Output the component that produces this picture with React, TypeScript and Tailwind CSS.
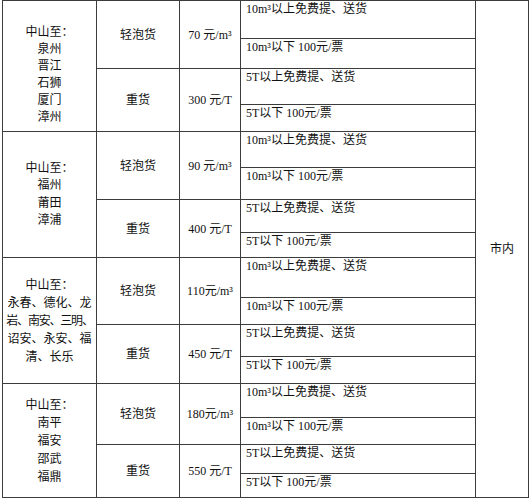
import React from "react";

const font = {
  fontFamily: '"Liberation Serif", "Noto Sans CJK SC", serif',
};

type Group = {
  lines: string[];
  lead: string;
  extra: string;
  light: string;
  heavy: string;
  rows: [number, number, number, number];
};

const groups: Group[] = [
  {
    lines: ["中山至：", "泉州", "晋江", "石狮", "厦门", "漳州"],
    lead: "leading-[17px]",
    extra: "pt-[18px]",
    light: "70 元/m³",
    heavy: "300 元/T",
    rows: [1, 2, 3, 4],
  },
  {
    lines: ["中山至：", "福州", "莆田", "漳浦"],
    lead: "leading-[17.5px]",
    extra: "",
    light: "90 元/m³",
    heavy: "400 元/T",
    rows: [5, 6, 7, 8],
  },
  {
    lines: ["中山至：", "永春、德化、龙", "岩、南安、三明、", "诏安、永安、福", "清、长乐"],
    lead: "leading-[18px]",
    extra: "",
    light: "110元/m³",
    heavy: "450 元/T",
    rows: [9, 10, 11, 12],
  },
  {
    lines: ["中山至：", "南平", "福安", "邵武", "福鼎"],
    lead: "leading-[18px]",
    extra: "",
    light: "180元/m³",
    heavy: "550 元/T",
    rows: [13, 14, 15, 16],
  },
];

const rowStartCls: Record<number, string> = {
  1: "row-start-1",
  2: "row-start-2",
  3: "row-start-3",
  4: "row-start-4",
  5: "row-start-5",
  6: "row-start-6",
  7: "row-start-7",
  8: "row-start-8",
  9: "row-start-9",
  10: "row-start-10",
  11: "row-start-11",
  12: "row-start-12",
  13: "row-start-13",
  14: "row-start-14",
  15: "row-start-15",
  16: "row-start-16",
};

const rowTexts = ["10m³以上免费提、送货", "10m³以下 100元/票", "5T以上免费提、送货", "5T以下 100元/票"];

export default function App() {
  return (
    <div className="w-[530px] h-[500px] bg-white" style={font}>
      <div
        className="ml-[2px] w-[527px] grid bg-[#3c3c3c] p-px gap-px text-[12px] text-[#111]"
        style={{
          gridTemplateColumns: "93px 82px 60px 234px 52px",
          gridTemplateRows:
            "37px 29px 35px 26px 35px 31px 32px 24px 39px 26px 31px 26px 33px 26px 28px 23px",
        }}
      >
        {groups.map((g, gi) => (
          <React.Fragment key={gi}>
            <div
              className={`col-start-1 row-span-4 bg-white flex flex-col items-center justify-center text-center whitespace-nowrap ${g.lead} ${g.extra} ${rowStartCls[g.rows[0]]}`}
            >
              {g.lines.map((l, i) => (
                <div key={i} className={l.length === 8 ? "tracking-[-1.2px]" : ""}>
                  {l}
                </div>
              ))}
            </div>
            <div
              className={`col-start-2 row-span-2 bg-white flex items-center justify-center ${rowStartCls[g.rows[0]]}`}
            >
              轻泡货
            </div>
            <div
              className={`col-start-3 row-span-2 bg-white flex items-center justify-center whitespace-nowrap ${rowStartCls[g.rows[0]]}`}
            >
              {g.light}
            </div>
            <div
              className={`col-start-2 row-span-2 bg-white flex items-center justify-center ${rowStartCls[g.rows[2]]}`}
            >
              重货
            </div>
            <div
              className={`col-start-3 row-span-2 bg-white flex items-center justify-center whitespace-nowrap ${rowStartCls[g.rows[2]]}`}
            >
              {g.heavy}
            </div>
            {g.rows.map((r, i) => (
              <div
                key={r}
                className={`col-start-4 bg-white pl-[5px] leading-[17px] whitespace-nowrap ${rowStartCls[r]}`}
              >
                {rowTexts[i]}
              </div>
            ))}
          </React.Fragment>
        ))}
        <div className="col-start-5 row-start-1 row-span-16 bg-white flex items-center justify-center">
          市内
        </div>
      </div>
    </div>
  );
}
